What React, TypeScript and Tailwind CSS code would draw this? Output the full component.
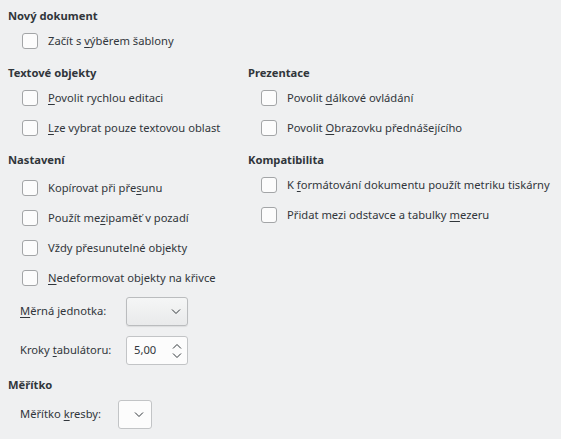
import React from "react";

function Heading({ children, className = "" }: { children: React.ReactNode; className?: string }) {
  return <div className={"h-4 leading-4 font-bold " + className}>{children}</div>;
}

function CheckRow({ children, className = "" }: { children: React.ReactNode; className?: string }) {
  return (
    <div className={"h-[30px] flex items-center " + className}>
      <span className="w-4 h-4 shrink-0 rounded-[3px] border border-[#a3a5a7] bg-[#fcfcfc]" />
      <span className="ml-[10px] whitespace-nowrap">{children}</span>
    </div>
  );
}

function U({ children }: { children: React.ReactNode }) {
  return <span className="underline underline-offset-2 decoration-1">{children}</span>;
}

function Chevron({ up = false }: { up?: boolean }) {
  return (
    <svg width="10" height="6" viewBox="0 0 10 6" className="block">
      <path
        d={up ? "M1 5.5 L5 1.5 L9 5.5" : "M1 0.5 L5 4.5 L9 0.5"}
        fill="none"
        stroke="#31363b"
        strokeWidth="1"
      />
    </svg>
  );
}

export default function App() {
  return (
    <div className="w-[561px] h-[439px] overflow-hidden bg-[#eff0f1] text-[#31363b] text-[11.2px] font-['Noto_Sans',sans-serif]">
      <Heading className="ml-2 pt-0 mt-2">Nový dokument</Heading>
      <CheckRow className="mt-[2px] pl-[22px]">
        Začít s <U>v</U>ýběrem šablony
      </CheckRow>

      <div className="flex">
        {/* levý sloupec */}
        <div className="w-[248px] shrink-0">
          <Heading className="mt-[9px] ml-2">Textové objekty</Heading>
          <CheckRow className="mt-[2px] pl-[22px]">
            <U>P</U>ovolit rychlou editaci
          </CheckRow>
          <CheckRow className="pl-[22px]">
            <U>L</U>ze vybrat pouze textovou oblast
          </CheckRow>

          <Heading className="mt-[9px] ml-2">Nastavení</Heading>
          <CheckRow className="mt-[5px] pl-[22px]">
            Kopírovat při pře<U>s</U>unu
          </CheckRow>
          <CheckRow className="pl-[22px]">
            Použít me<U>z</U>ipaměť v pozadí
          </CheckRow>
          <CheckRow className="pl-[22px]">
            Vždy přesunutelné ob<U>j</U>ekty
          </CheckRow>
          <CheckRow className="pl-[22px]">
            <U>N</U>edeformovat objekty na křivce
          </CheckRow>

          <div className="mt-[4px] h-[29px] flex items-center pl-5">
            <span className="w-[106px]">
              <U>M</U>ěrná jednotka:
            </span>
            <div className="w-[62px] h-[29px] rounded-[3px] border border-[#babcbe] bg-gradient-to-b from-[#f5f6f6] to-[#e9eaeb] shadow-[0_1px_1px_rgba(0,0,0,0.08)] flex items-center justify-end pr-[6px]">
              <Chevron />
            </div>
          </div>
          <div className="mt-[10px] h-[29px] flex items-center pl-5">
            <span className="w-[106px]">
              Kroky <U>t</U>abulátoru:
            </span>
            <div className="w-[62px] h-[29px] rounded-[3px] border border-[#c2c4c6] bg-[#fcfcfc] flex items-center pl-[7px] pr-[5px]">
              <span className="flex-1">5,00</span>
              <div className="flex flex-col gap-[4px]">
                <Chevron up />
                <Chevron />
              </div>
            </div>
          </div>

          <Heading className="mt-[12px] ml-2">Měřítko</Heading>
          <div className="mt-[7px] h-[29px] flex items-center pl-5">
            <span className="w-[98px]">
              Měřítko <U>k</U>resby:
            </span>
            <div className="w-[34px] h-[29px] rounded-[3px] border border-[#c2c4c6] bg-[#fcfcfc] flex items-center justify-end pr-[7px]">
              <Chevron />
            </div>
          </div>
        </div>

        {/* pravý sloupec */}
        <div className="flex-1">
          <Heading className="mt-[9px]">Prezentace</Heading>
          <CheckRow className="mt-[2px] pl-[13px]">
            Povolit <U>d</U>álkové ovládání
          </CheckRow>
          <CheckRow className="pl-[13px]">
            Povolit <U>O</U>brazovku přednášejícího
          </CheckRow>

          <Heading className="mt-[9px]">Kompatibilita</Heading>
          <CheckRow className="mt-[2px] pl-[13px]">
            K <U>f</U>ormátování dokumentu použít metriku tiskárny
          </CheckRow>
          <CheckRow className="pl-[13px]">
            Přidat mezi odstavce a tabulky <U>m</U>ezeru
          </CheckRow>
        </div>
      </div>
    </div>
  );
}
